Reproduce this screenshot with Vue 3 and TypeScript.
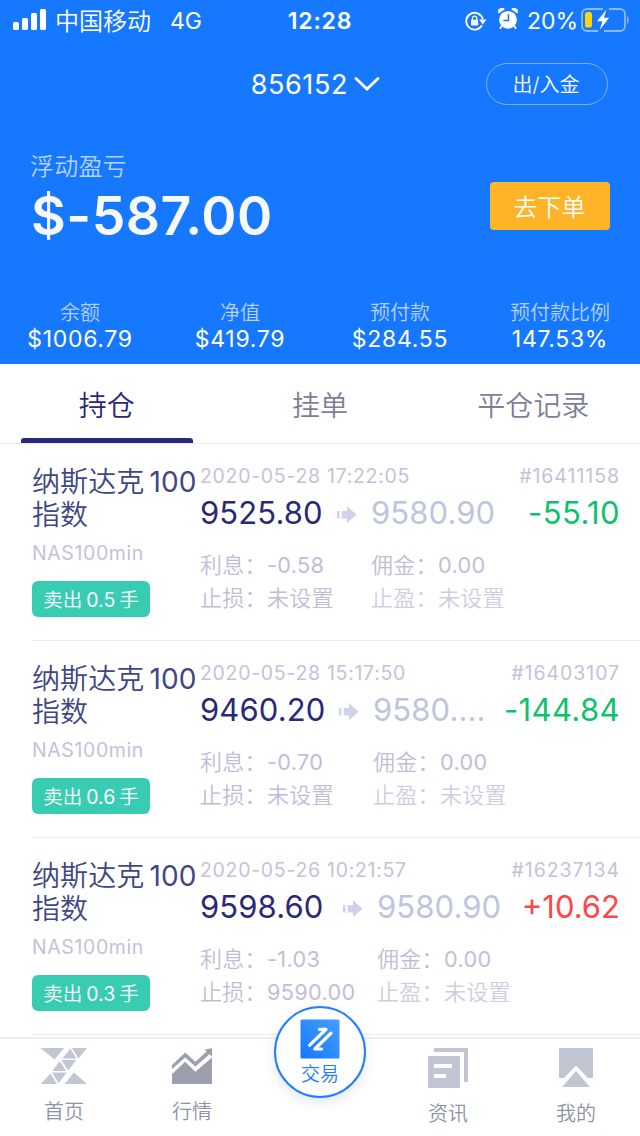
<script setup lang="ts">
interface Position {
  time: string
  ticket: string
  open: string
  current: string
  profit: string
  gain: boolean
  lots: string
  interest: string
  stopLoss: string
  entryWidth: number
}

const stats = [
  { label: '余额', value: '$1006.79' },
  { label: '净值', value: '$419.79' },
  { label: '预付款', value: '$284.55' },
  { label: '预付款比例', value: '147.53%' },
]

const positions: Position[] = [
  { time: '2020-05-28 17:22:05', ticket: '#16411158', open: '9525.80', current: '9580.90', profit: '-55.10', gain: false, lots: '0.5', interest: '-0.58', stopLoss: '未设置', entryWidth: 171 },
  { time: '2020-05-28 15:17:50', ticket: '#16403107', open: '9460.20', current: '9580....', profit: '-144.84', gain: false, lots: '0.6', interest: '-0.70', stopLoss: '未设置', entryWidth: 173 },
  { time: '2020-05-26 10:21:57', ticket: '#16237134', open: '9598.60', current: '9580.90', profit: '+10.62', gain: true, lots: '0.3', interest: '-1.03', stopLoss: '9590.00', entryWidth: 177 },
]
</script>

<template>
  <div class="screen">
    <header class="hero">
      <div class="status">
        <div class="status-left">
          <svg class="signal" width="33" height="21" viewBox="0 0 33 21" fill="#fff">
            <rect x="0" y="13" width="6" height="8" rx="1.6" />
            <rect x="9" y="9" width="6" height="12" rx="1.6" />
            <rect x="18" y="4" width="6" height="17" rx="1.6" />
            <rect x="27" y="0" width="6" height="21" rx="1.6" />
          </svg>
          <span class="carrier">中国移动</span>
          <span class="net">4G</span>
        </div>
        <span class="clock">12:28</span>
        <div class="status-right">
          <svg class="lock" width="22" height="20" viewBox="0 0 22 20">
            <path d="M17 14.2A8.4 8.4 0 1 1 17.8 8.4" fill="none" stroke="#fff" stroke-width="1.8" />
            <path d="M14.2 8.4h7.2l-3.6 5z" fill="#fff" />
            <rect x="6" y="8.8" width="7.2" height="5.6" rx=".8" fill="#fff" />
            <path d="M7.5 9.2V7.2a2.1 2.1 0 0 1 4.2 0v2" fill="none" stroke="#fff" stroke-width="1.3" />
          </svg>
          <svg class="alarm" width="20" height="22" viewBox="0 0 20 22">
            <path d="M4.2 17.5L2.4 20M15.8 17.5l1.8 2.5" stroke="#fff" stroke-width="2" stroke-linecap="round" />
            <circle cx="10" cy="11.8" r="8.9" fill="#fff" />
            <path d="M.9 5.6A3.6 3.6 0 0 1 6.8 1.2zM19.1 5.6a3.6 3.6 0 0 0-5.9-4.4z" fill="#fff" />
            <path d="M10.4 6.2v6.2H5.4" fill="none" stroke="#1677ff" stroke-width="1.5" />
          </svg>
          <span class="percent">20%</span>
          <svg class="battery" width="48" height="24" viewBox="0 0 48 24">
            <path d="M22 1H6a5 5 0 0 0-5 5v12a5 5 0 0 0 5 5h11M28 1h11a5 5 0 0 1 5 5v12a5 5 0 0 1-5 5H23" fill="none" stroke="#8bbbff" stroke-width="1.8" />
            <path d="M46.4 8.5c1.3.8 1.3 6.2 0 7z" fill="#8bbbff" stroke="#8bbbff" stroke-width=".6" />
            <rect x="4" y="4" width="7" height="15.5" rx="2.6" fill="#ffd60a" />
            <path d="M25.5 1.5L16 13.2h5.4L18.6 22 28.2 9.8h-5.3z" fill="#fff" />
          </svg>
        </div>
      </div>

      <div class="account">
        <div class="account-id">
          <span>856152</span>
          <svg width="26" height="16" viewBox="0 0 26 16"><path d="M2 2.5l11 10.5L24 2.5" fill="none" stroke="#fff" stroke-width="2.8" stroke-linecap="round" /></svg>
        </div>
        <button class="transfer">出/入金</button>
      </div>

      <div class="summary">
        <div>
          <div class="summary-label">浮动盈亏</div>
          <div class="summary-value">$-587.00</div>
        </div>
        <button class="order">去下单</button>
      </div>

      <div class="stats">
        <div v-for="s in stats" :key="s.label" class="stat">
          <div class="stat-label">{{ s.label }}</div>
          <div class="stat-value">{{ s.value }}</div>
        </div>
      </div>
    </header>

    <nav class="tabs">
      <div class="tab active">持仓</div>
      <div class="tab">挂单</div>
      <div class="tab">平仓记录</div>
    </nav>

    <main class="list">
      <article v-for="p in positions" :key="p.ticket" class="item">
        <div class="product">
          <div class="name">纳斯达克<span class="name-num">100</span><br />指数</div>
          <div class="symbol">NAS100min</div>
          <div class="tag">卖出<span class="lots">{{ p.lots }}</span>手</div>
        </div>
        <div class="detail">
          <div class="meta"><span>{{ p.time }}</span><span class="ticket">{{ p.ticket }}</span></div>
          <div class="prices">
            <div class="entry" :style="{ width: p.entryWidth + 'px' }">
              <span class="open">{{ p.open }}</span>
              <svg class="arrow" width="20" height="17" viewBox="0 0 20 17" fill="#d0d2e9"><path d="M0 5h2.5v7.5H0zM4.7 5H10V0l9.5 8.7L10 17v-4.5H4.7z" /></svg>
            </div>
            <span class="current">{{ p.current }}</span>
            <span class="profit" :class="{ gain: p.gain }">{{ p.profit }}</span>
          </div>
          <div class="extras">
            <div class="extra" :style="{ width: p.entryWidth + 'px' }">
              <div><span class="key">利息<i>：</i></span><span class="num">{{ p.interest }}</span></div>
              <div><span class="key">止损<i>：</i></span><span :class="{ num: p.stopLoss !== '未设置' }">{{ p.stopLoss }}</span></div>
            </div>
            <div class="extra">
              <div><span class="key">佣金<i>：</i></span><span class="num">0.00</span></div>
              <div class="faint"><span class="key">止盈<i>：</i></span>未设置</div>
            </div>
          </div>
        </div>
      </article>
    </main>

    <footer class="bar">
      <div class="bar-item">
        <svg width="48" height="40" viewBox="0 0 48 40" fill="#c2c5d4">
          <path d="M.5 2H24L14.6 13.6zM30.4 2.6l6.1 9.9H22.5zM32 2h15l-8.6 10.4zM21.3 14h14.9l-7.9 10.4zM19.6 15.2l6.6 9.8H12.3zM12 26.4h14.6L18.5 37.2zM10.4 27.4L17 38H.8zM34 26.4L47 38H24.6z" />
        </svg>
        <span>首页</span>
      </div>
      <div class="bar-item">
        <svg width="48" height="40" viewBox="0 0 48 40" fill="#9b9fb0">
          <path d="M4 28L17.2 15.8 27.4 25.8 44 11.5V38H4z" />
          <path d="M4 19L17.2 6.5l10.2 9.2L38.6 5.4 36.8 3.4 44 2.3v8.2L41.4 8.2 27.4 20.5 17.2 11.5 4 23z" />
        </svg>
        <span>行情</span>
      </div>
      <div class="bar-item">
        <div class="trade">
          <svg width="40" height="40" viewBox="0 0 40 40">
            <defs><linearGradient id="tradeFill" x1="0" y1="1" x2="1" y2="0"><stop offset="0" stop-color="#1677ff" /><stop offset="1" stop-color="#459fff" /></linearGradient></defs>
            <rect x=".5" y=".5" width="39" height="39" rx="1.5" fill="url(#tradeFill)" />
            <path d="M9.7 26.2L26 10.3h-6.6M31 14.2L14.8 30h6.8" fill="none" stroke="#fff" stroke-width="3.2" stroke-linecap="round" stroke-linejoin="round" />
          </svg>
          <span>交易</span>
        </div>
      </div>
      <div class="bar-item low">
        <svg width="48" height="42" viewBox="0 0 48 42" fill="#c2c5d4">
          <path d="M10 2h34v34h-4V6H10z" />
          <path fill-rule="evenodd" d="M4 10h32v32H4zM10 18v4h18v-4zM10 28v4h12v-4z" />
        </svg>
        <span>资讯</span>
      </div>
      <div class="bar-item low">
        <svg width="48" height="42" viewBox="0 0 48 42" fill="#c2c5d4">
          <path d="M7 2h34v30h-5.2L24 19.5 12.2 32H7zM24 25l14 16H10z" />
        </svg>
        <span>我的</span>
      </div>
    </footer>
  </div>
</template>

<style>
body {
  background: #fff;
}
</style>

<style scoped>
.screen {
  position: relative;
  width: 640px;
  height: 1136px;
  overflow: hidden;
  background: #fff;
  font-family: Inter, "Noto Sans CJK SC", sans-serif;
  font-weight: 400;
  white-space: nowrap;
}
button {
  padding: 0;
  font-family: inherit;
  font-weight: 350;
  color: #fff;
}
.hero {
  height: 364px;
  background: #1677ff;
  color: #fff;
}
.status {
  display: grid;
  grid-template-columns: 1fr auto 1fr;
  height: 40px;
  line-height: 42px;
}
.status-left,
.status-right {
  display: flex;
  align-items: center;
  height: 40px;
}
.status-left {
  padding-left: 13px;
}
.signal {
  margin-bottom: 1px;
}
.carrier {
  padding-top: 3px;
  margin-left: 9px;
  font-size: 24px;
  font-weight: 350;
}
.net {
  padding-top: 2px;
  margin-left: 19px;
  font-size: 23px;
}
.clock {
  font-size: 23px;
  font-weight: 600;
  letter-spacing: 0.8px;
}
.status-right {
  justify-content: flex-end;
  padding-right: 11px;
}
.alarm {
  margin: 0 9px 2px 11px;
}
.percent {
  padding-top: 2px;
  font-size: 23px;
}
.battery {
  margin-left: 3px;
  margin-bottom: 1px;
}
.lock {
  margin-top: 1px;
}
.account {
  display: flex;
  justify-content: flex-end;
  align-items: center;
  height: 88px;
  padding-right: 32px;
}
.account-id {
  display: flex;
  align-items: center;
  gap: 6px;
  margin-right: 106px;
  font-size: 27px;
  letter-spacing: 0.6px;
}
.transfer {
  width: 122px;
  height: 42px;
  border: 1px solid #83aef2;
  border-radius: 21px;
  background: none;
  padding: 0 2px 2px 0;
  font-size: 20px;
}
.summary {
  display: flex;
  justify-content: space-between;
  height: 148px;
  padding: 20px 30px 0;
}
.summary-label {
  height: 34px;
  line-height: 38px;
  font-size: 24px;
  font-weight: 350;
  letter-spacing: 0.2px;
  color: #b5d2ff;
}
.summary-value {
  height: 66px;
  line-height: 67px;
  margin-left: 1px;
  font-size: 53.5px;
  font-weight: 600;
  letter-spacing: 0.5px;
  color: #f8f8ff;
}
.order {
  width: 120px;
  height: 48px;
  margin-top: 34px;
  padding: 0 1px 2px 0;
  border: 0;
  border-radius: 4px;
  background: #ffb427;
  font-size: 24px;
}
.stats {
  display: grid;
  grid-template-columns: repeat(4, 1fr);
  text-align: center;
}
.stat-label {
  height: 30px;
  line-height: 35px;
  font-size: 20px;
  font-weight: 350;
  color: #b5d2ff;
}
.stat-value {
  height: 26px;
  line-height: 26px;
  font-size: 23px;
  letter-spacing: 0.7px;
}
.tabs {
  display: grid;
  grid-template-columns: repeat(3, 1fr);
  height: 79px;
  border-bottom: 1px solid #e9e9f2;
  font-size: 28px;
  font-weight: 350;
  color: #807e96;
}
.tab {
  display: flex;
  flex-direction: column;
  align-items: center;
  height: 79px;
  line-height: 84px;
}
.tab.active {
  color: #2a2878;
}
.tab.active::after {
  content: "";
  width: 172px;
  height: 5px;
  margin-top: -10px;
  border-radius: 3px 3px 0 0;
  background: #2a2878;
}
.list {
  padding-left: 32px;
}
.item {
  display: flex;
  height: 196px;
  border-bottom: 1px solid #e9e9f2;
}
.product {
  width: 168px;
  padding-top: 22px;
}
.name {
  height: 66px;
  line-height: 33px;
  font-size: 28px;
  font-weight: 350;
  letter-spacing: 0.1px;
  color: #404784;
}
.name-num {
  margin-left: 5px;
  font-size: 28px;
  font-weight: 400;
}
.symbol {
  height: 28px;
  margin-top: 7px;
  line-height: 28px;
  font-size: 19.5px;
  letter-spacing: 0.6px;
  color: #c4c2d9;
}
.tag {
  display: flex;
  justify-content: center;
  width: 118px;
  height: 36px;
  margin-top: 14px;
  line-height: 38px;
  border-radius: 6px;
  background: #38ccb2;
  color: #fff;
  font-size: 19.5px;
  font-weight: 350;
}
.lots {
  margin: 0 4px;
  font-weight: 400;
}
.detail {
  width: 419px;
  padding-top: 17px;
}
.meta {
  display: flex;
  justify-content: space-between;
  height: 30px;
  line-height: 31px;
  font-size: 19.5px;
  letter-spacing: 0.7px;
  color: #c4c2d9;
}
.ticket {
  margin-right: -1px;
  letter-spacing: 0.95px;
}
.prices {
  display: flex;
  height: 44px;
  line-height: 44px;
  font-size: 31px;
  letter-spacing: 0.1px;
}
.entry {
  display: flex;
  align-items: center;
  justify-content: space-between;
  color: #2a2878;
}
.arrow {
  margin: 3px 14px 0 0;
}
.current {
  color: #bdc5de;
}
.profit {
  margin-left: auto;
  margin-right: -1px;
  letter-spacing: 0.4px;
  color: #0cc26b;
}
.profit.gain {
  letter-spacing: 0;
  color: #ff4546;
}
.extras {
  display: flex;
  padding-top: 13px;
  line-height: 34px;
  font-size: 22px;
  font-weight: 350;
  color: #c0bed6;
}
.extra > div {
  display: flex;
  height: 33px;
  letter-spacing: 0.3px;
}
.extra .num {
  font-size: 21.7px;
  font-weight: 400;
}
.key {
  width: 67px;
  font-size: 22px;
}
.key i {
  font-style: normal;
}
.extra > .faint {
  color: #cfcde0;
}
.bar {
  position: absolute;
  left: 0;
  bottom: 0;
  display: grid;
  grid-template-columns: repeat(5, 1fr);
  width: 640px;
  height: 97px;
  border-top: 2px solid #eeeefa;
  background: #fff;
  font-size: 20px;
  font-weight: 350;
  color: #8f92a5;
}
.bar-item {
  display: flex;
  flex-direction: column;
  align-items: center;
  padding-top: 7px;
}
.bar-item > span {
  height: 30px;
  margin-top: 11px;
  line-height: 30px;
}
.trade {
  display: flex;
  flex-direction: column;
  align-items: center;
  width: 88px;
  height: 77px;
  margin-top: -40px;
  padding-top: 11px;
  border: 2px solid #237dff;
  border-radius: 50%;
  background: #fff;
  box-shadow: 0 4px 12px rgba(70, 90, 190, 0.16);
  color: #237dff;
  font-size: 19px;
}
.trade > span {
  line-height: 26px;
  margin-top: 3px;
}
</style>
